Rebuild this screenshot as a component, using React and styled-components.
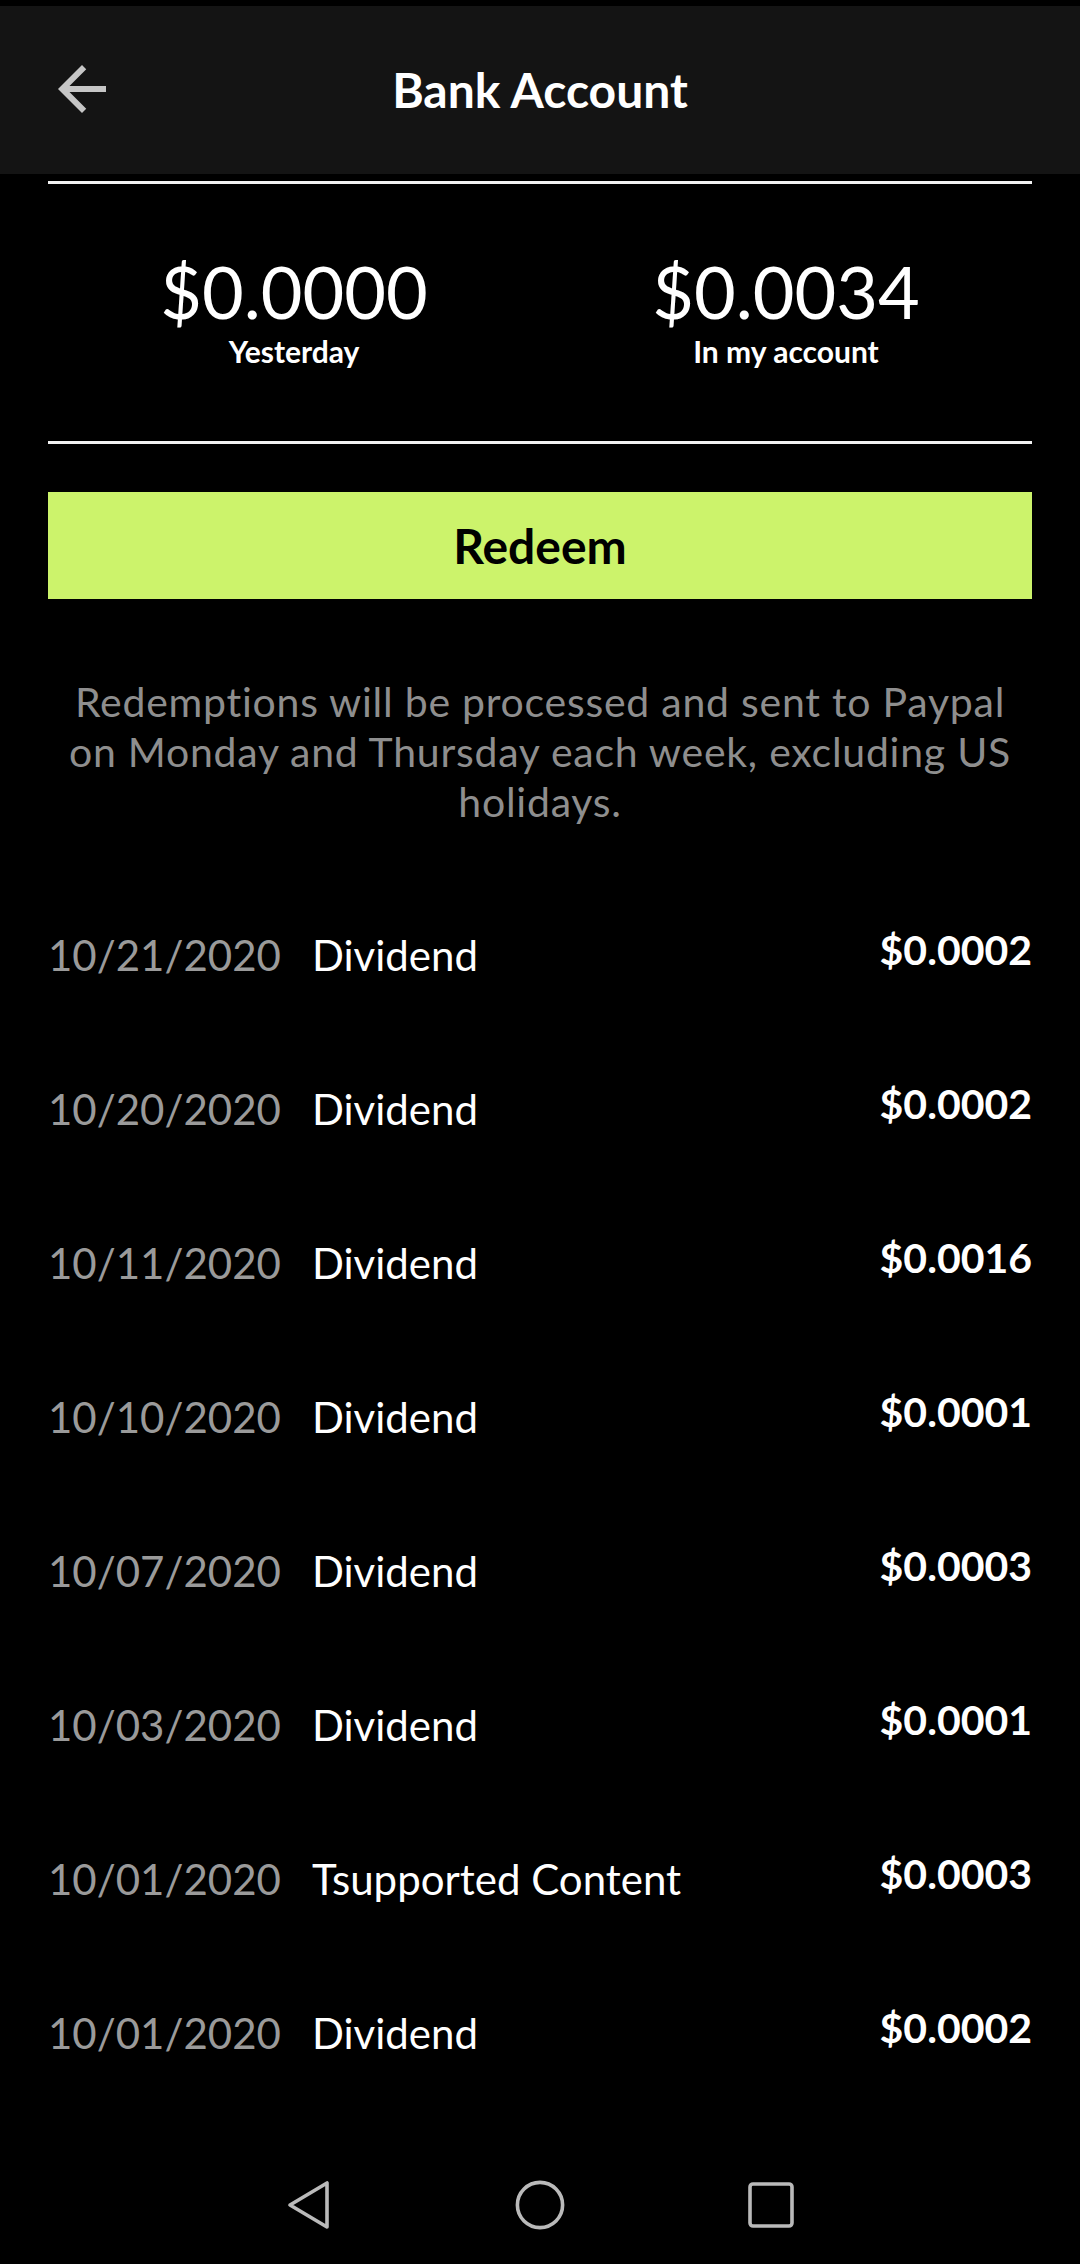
import React from "react";
import styled, { createGlobalStyle } from "styled-components";

const GlobalStyle = createGlobalStyle`
  html, body {
    margin: 0;
    padding: 0;
    background: #000;
  }
  body {
    font-family: Lato, "Open Sans", "Liberation Sans", sans-serif;
    color: #fff;
  }
`;

const transactions = [
  { id: 1, date: "10/21/2020", label: "Dividend", amount: "$0.0002" },
  { id: 2, date: "10/20/2020", label: "Dividend", amount: "$0.0002" },
  { id: 3, date: "10/11/2020", label: "Dividend", amount: "$0.0016" },
  { id: 4, date: "10/10/2020", label: "Dividend", amount: "$0.0001" },
  { id: 5, date: "10/07/2020", label: "Dividend", amount: "$0.0003" },
  { id: 6, date: "10/03/2020", label: "Dividend", amount: "$0.0001" },
  { id: 7, date: "10/01/2020", label: "Tsupported Content", amount: "$0.0003" },
  { id: 8, date: "10/01/2020", label: "Dividend", amount: "$0.0002" },
];

function BackArrow() {
  return (
    <svg width="72" height="72" viewBox="0 0 24 24" fill="#c6c6c6">
      <path d="M20 11H7.83l5.59-5.59L12 4l-8 8 8 8 1.41-1.41L7.83 13H20v-2z" />
    </svg>
  );
}

export default function App() {
  return (
    <>
      <GlobalStyle />
      <Screen>
        <Header>
          <BackButton aria-label="Back">
            <BackArrow />
          </BackButton>
          <Title>Bank Account</Title>
          <span />
        </Header>

        <Content>
          <Divider $gap={7} />
          <Stats>
            <Stat>
              <StatValue>$0.0000</StatValue>
              <StatLabel>Yesterday</StatLabel>
            </Stat>
            <Stat>
              <StatValue>$0.0034</StatValue>
              <StatLabel>In my account</StatLabel>
            </Stat>
          </Stats>
          <Divider />

          <RedeemButton>Redeem</RedeemButton>

          <Notice>
            Redemptions will be processed and sent to Paypal on Monday and
            Thursday each week, excluding US holidays.
          </Notice>

          <List>
            {transactions.map((t) => (
              <Row key={t.id}>
                <DateText>{t.date}</DateText>
                <Description>{t.label}</Description>
                <Amount>{t.amount}</Amount>
              </Row>
            ))}
          </List>
        </Content>

        <NavBar>
          <NavIcon>
            <svg width="60" height="60" viewBox="0 0 60 60">
              <polygon
                points="11,30 48,8 48,52"
                fill="none"
                stroke="#bababa"
                strokeWidth="3.6"
                strokeLinejoin="round"
              />
            </svg>
          </NavIcon>
          <NavIcon>
            <svg width="60" height="60" viewBox="0 0 60 60">
              <circle cx="30" cy="30" r="22.6" fill="none" stroke="#bababa" strokeWidth="3.6" />
            </svg>
          </NavIcon>
          <NavIcon>
            <svg width="60" height="60" viewBox="0 0 60 60">
              <rect x="9" y="9" width="42" height="42" rx="3" fill="none" stroke="#bababa" strokeWidth="3.6" />
            </svg>
          </NavIcon>
        </NavBar>
      </Screen>
    </>
  );
}

const Screen = styled.div`
  min-height: 2264px;
  display: flex;
  flex-direction: column;
  background: #000;
  padding-top: 6px;
  box-sizing: border-box;
`;

const Header = styled.header`
  height: 168px;
  background: #141414;
  display: grid;
  grid-template-columns: 1fr auto 1fr;
  align-items: center;
`;

const BackButton = styled.div`
  display: flex;
  align-items: center;
  padding-left: 46px;
  margin-top: -3px;
`;

const Title = styled.h1`
  margin: 0;
  font-size: 48px;
  font-weight: 700;
  line-height: 166px;
  color: #fff;
`;

const Content = styled.main`
  padding: 0 48px;
`;

const Divider = styled.div`
  height: 3px;
  background: #f2f2f2;
  margin-top: ${({ $gap }) => $gap || 0}px;
`;

const Stats = styled.section`
  display: grid;
  grid-template-columns: 1fr 1fr;
  padding: 71px 0 75px;
`;

const Stat = styled.div`
  display: flex;
  flex-direction: column;
  align-items: center;
`;

const StatValue = styled.div`
  font-size: 72px;
  font-weight: 400;
  line-height: 72px;
`;

const StatLabel = styled.div`
  font-size: 30px;
  font-weight: 700;
  line-height: 30px;
  margin-top: 9px;
`;

const RedeemButton = styled.button`
  display: block;
  width: 100%;
  height: 107px;
  margin-top: 48px;
  padding: 0;
  border: none;
  background: #ccf36b;
  color: #000;
  font-family: inherit;
  font-size: 48px;
  font-weight: 700;
  cursor: pointer;
`;

const Notice = styled.p`
  margin: 78px 0 0;
  padding: 0 14px;
  text-align: center;
  font-size: 41px;
  line-height: 50px;
  letter-spacing: 0.75px;
  color: #8e8e8e;
`;

const List = styled.ul`
  list-style: none;
  margin: 51px 0 0;
  padding: 0;
`;

const Row = styled.li`
  display: flex;
  align-items: center;
  height: 154px;
  font-size: 42px;
  line-height: 48px;
`;

const DateText = styled.span`
  flex: 0 0 264px;
  color: #9a9a9a;
`;

const Description = styled.span`
  flex: 1;
  color: #fff;
`;

const Amount = styled.span`
  font-size: 41px;
  font-weight: 700;
  color: #fff;
  margin-bottom: 11px;
`;

const NavBar = styled.nav`
  margin-top: auto;
  height: 118px;
  display: flex;
  justify-content: center;
  align-items: center;
  gap: 171px;
`;

const NavIcon = styled.div`
  width: 60px;
  height: 60px;
  display: flex;
`;
